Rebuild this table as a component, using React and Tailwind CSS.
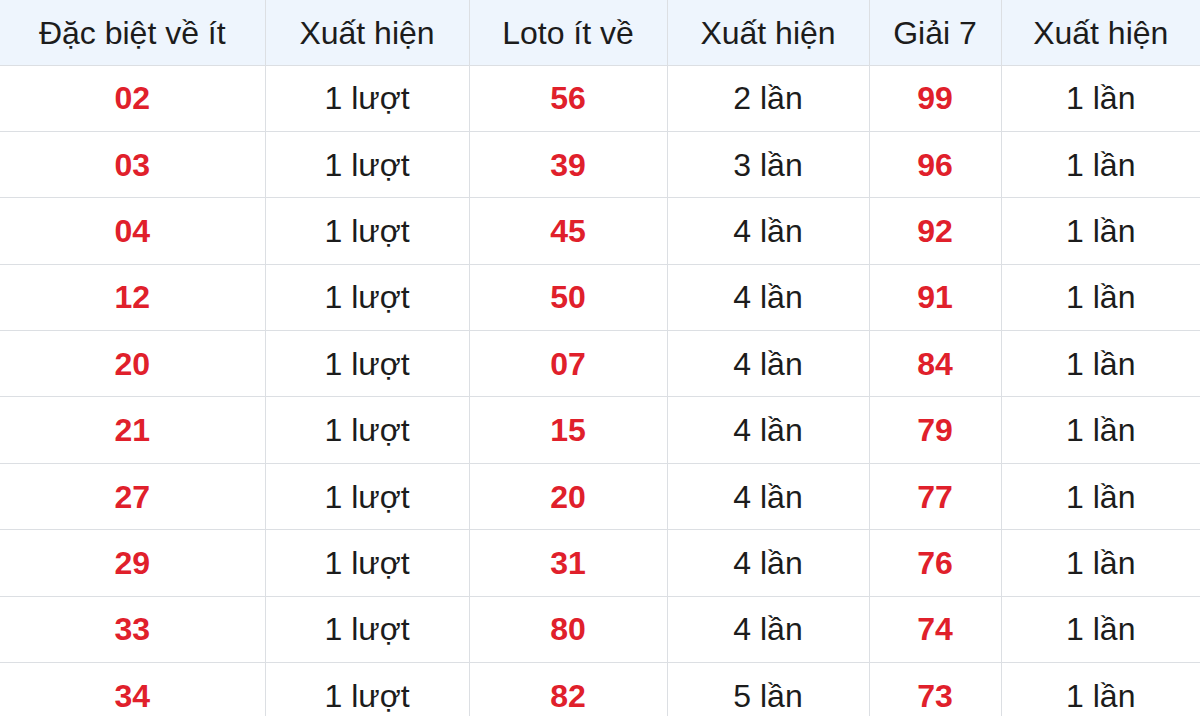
import React from "react";

const rows = [
  ["02", "1 lượt", "56", "2 lần", "99", "1 lần"],
  ["03", "1 lượt", "39", "3 lần", "96", "1 lần"],
  ["04", "1 lượt", "45", "4 lần", "92", "1 lần"],
  ["12", "1 lượt", "50", "4 lần", "91", "1 lần"],
  ["20", "1 lượt", "07", "4 lần", "84", "1 lần"],
  ["21", "1 lượt", "15", "4 lần", "79", "1 lần"],
  ["27", "1 lượt", "20", "4 lần", "77", "1 lần"],
  ["29", "1 lượt", "31", "4 lần", "76", "1 lần"],
  ["33", "1 lượt", "80", "4 lần", "74", "1 lần"],
  ["34", "1 lượt", "82", "5 lần", "73", "1 lần"],
];

const heads = ["Đặc biệt về ít", "Xuất hiện", "Loto ít về", "Xuất hiện", "Giải 7", "Xuất hiện"];
const widths = ["w-[265px]", "w-[204px]", "w-[198px]", "w-[202px]", "w-[132px]", "w-[199px]"];

export default function App() {
  return (
    <div className="h-[716px] w-[1200px] overflow-hidden bg-white font-['Liberation_Sans',Arial,sans-serif] text-[32px] text-[#1c1c1c]">
      <table className="w-full table-fixed border-collapse">
        <colgroup>
          {widths.map((w, i) => (
            <col key={i} className={w} />
          ))}
        </colgroup>
        <thead>
          <tr className="h-[65px] bg-[#eef5fd]">
            {heads.map((h, i) => (
              <th key={i} className="border-x border-b border-[#dcdfe3] pt-[2px] font-normal first:border-l-0 last:border-r-0">
                {h}
              </th>
            ))}
          </tr>
        </thead>
        <tbody>
          {rows.map((r, ri) => (
            <tr key={ri} className="h-[66.4px]">
              {r.map((c, ci) => (
                <td
                  key={ci}
                  className={
                    "border border-[#dcdfe3] text-center first:border-l-0 last:border-r-0 " +
                    (ci % 2 === 0 ? "font-bold text-[#e0202b]" : "")
                  }
                >
                  {c}
                </td>
              ))}
            </tr>
          ))}
        </tbody>
      </table>
    </div>
  );
}
